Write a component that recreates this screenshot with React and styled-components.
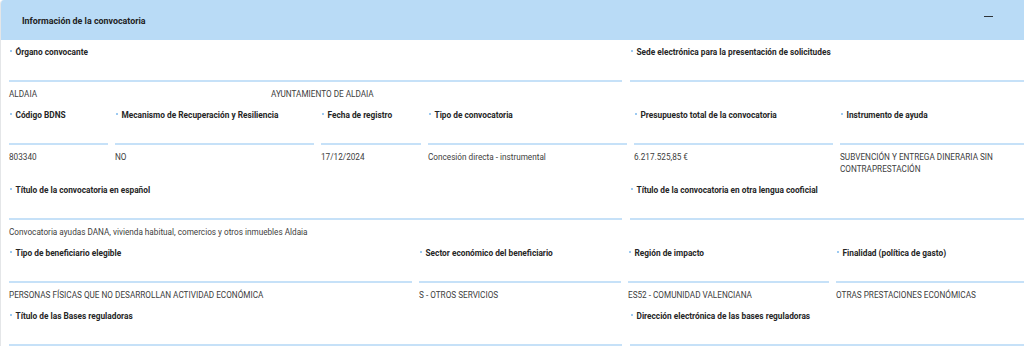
import React from 'react';
import styled, { createGlobalStyle } from 'styled-components';

const GlobalStyle = createGlobalStyle`
  html, body {
    margin: 0;
    padding: 0;
    background: #fff;
    overflow: hidden;
  }
  body {
    font-family: Roboto, "Liberation Sans", Arial, sans-serif;
  }
`;

const Card = styled.section`
  width: 1024px;
  height: 346px;
  border-left: 1px solid #e4e6e8;
  border-top-left-radius: 4px;
  overflow: hidden;
  box-sizing: border-box;
`;

const Header = styled.header`
  height: 40px;
  background: #b9dbf6;
  display: flex;
  align-items: center;
  justify-content: space-between;
  padding: 0 31px 0 21px;
  box-sizing: border-box;
`;

const Title = styled.h2`
  margin: 1px 0 0;
  font-size: 8.9px;
  font-weight: 700;
  color: #222;
`;

const Collapse = styled.button`
  width: 9px;
  height: 1.6px;
  padding: 0;
  border: none;
  background: #2e3338;
  align-self: flex-start;
  margin-top: 15.5px;
  cursor: pointer;
`;

const Body = styled.div`
  display: flex;
  flex-direction: column;
  gap: 9px;
  padding: 6px 0 0 8px;
`;

const Row = styled.div`
  display: grid;
  grid-template-columns: ${(p) => p.$cols};
  column-gap: ${(p) => p.$gap || 7}px;
`;

const Field = styled.div`
  display: flex;
  flex-direction: column;
  min-width: 0;
`;

const Label = styled.label`
  display: flex;
  align-items: center;
  height: 12px;
  font-size: 8.3px;
  font-weight: 700;
  color: #262626;
  white-space: nowrap;

  &::before {
    content: '';
    width: 2px;
    height: 2px;
    border-radius: 50%;
    background: #7db9ec;
    margin: 0 3.5px 2px 1px;
  }
`;

const Input = styled.div`
  height: 22px;
  border-bottom: 2px solid #c6e1f8;
`;

const Value = styled.div`
  margin-top: 6px;
  font-size: 8.2px;
  line-height: 12px;
  color: #404040;
  min-height: 12px;
`;

const Split = styled.div`
  display: grid;
  grid-template-columns: 262px 1fr;
`;

const Item = ({ label, children }) => (
  <Field>
    <Label>{label}</Label>
    <Input />
    <Value>{children}</Value>
  </Field>
);

export default function App() {
  return (
    <>
      <GlobalStyle />
      <Card>
        <Header>
          <Title>Información de la convocatoria</Title>
          <Collapse aria-label="Contraer" />
        </Header>
        <Body>
          <Row $cols="613px 1fr" $gap={8}>
            <Item label="Órgano convocante">
              <Split>
                <span>ALDAIA</span>
                <span>AYUNTAMIENTO DE ALDAIA</span>
              </Split>
            </Item>
            <Item label="Sede electrónica para la presentación de solicitudes" />
          </Row>
          <Row $cols="99px 199px 100px 199px 199px 1fr">
            <Item label="Código BDNS">803340</Item>
            <Item label="Mecanismo de Recuperación y Resiliencia">NO</Item>
            <Item label="Fecha de registro">17/12/2024</Item>
            <Item label="Tipo de convocatoria">Concesión directa - instrumental</Item>
            <Item label="Presupuesto total de la convocatoria">6.217.525,85 €</Item>
            <Item label="Instrumento de ayuda">
              SUBVENCIÓN Y ENTREGA DINERARIA SIN
              <br />
              CONTRAPRESTACIÓN
            </Item>
          </Row>
          <Row $cols="613px 1fr" $gap={8}>
            <Item label="Título de la convocatoria en español">
              Convocatoria ayudas DANA, vivienda habitual, comercios y otros inmuebles Aldaia
            </Item>
            <Item label="Título de la convocatoria en otra lengua cooficial" />
          </Row>
          <Row $cols="403px 202px 201px 1fr">
            <Item label="Tipo de beneficiario elegible">
              PERSONAS FÍSICAS QUE NO DESARROLLAN ACTIVIDAD ECONÓMICA
            </Item>
            <Item label="Sector económico del beneficiario">S - OTROS SERVICIOS</Item>
            <Item label="Región de impacto">ES52 - COMUNIDAD VALENCIANA</Item>
            <Item label="Finalidad (política de gasto)">OTRAS PRESTACIONES ECONÓMICAS</Item>
          </Row>
          <Row $cols="613px 1fr" $gap={8}>
            <Item label="Título de las Bases reguladoras" />
            <Item label="Dirección electrónica de las bases reguladoras" />
          </Row>
        </Body>
      </Card>
    </>
  );
}
